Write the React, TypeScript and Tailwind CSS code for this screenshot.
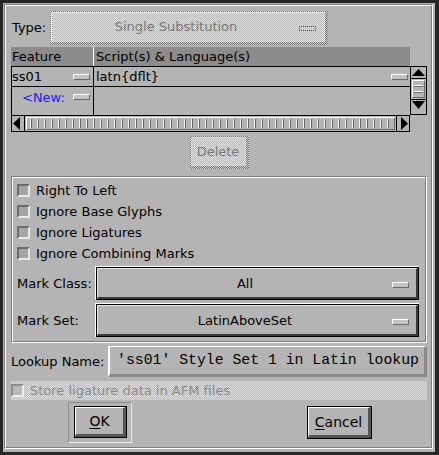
const checkerDark =
  "bg-[image:repeating-conic-gradient(#707070_0%_25%,#d4d4d4_0%_50%)] bg-[length:2px_2px]"
const checkerLight =
  "bg-[image:repeating-conic-gradient(#bdbdbd_0%_25%,#dcdcdc_0%_50%)] bg-[length:2px_2px]"

function Marker() {
  return (
    <span className="block w-[17px] h-[6px] bg-[#c4c4c4] border border-t-white border-l-white border-b-[#6a6a6a] border-r-[#6a6a6a]" />
  )
}

function Check({ disabled }: { disabled?: boolean }) {
  return (
    <span
      className={
        disabled
          ? "block w-[13px] h-[13px] border-2 border-t-[#8e8e8e] border-l-[#8e8e8e] border-b-[#eeeeee] border-r-[#eeeeee] bg-[#b8b8b8]"
          : "block w-[13px] h-[13px] border-2 border-t-[#6c6c6c] border-l-[#6c6c6c] border-b-[#e8e8e8] border-r-[#e8e8e8] bg-[#a4a4a4]"
      }
    />
  )
}

function Etched({ className, children }: { className?: string; children?: React.ReactNode }) {
  return (
    <div className={`border border-t-[#7c7c7c] border-l-[#7c7c7c] border-b-white border-r-white ${className ?? ""}`}>
      <div className="w-full h-full border border-t-white border-l-white border-b-[#7c7c7c] border-r-[#7c7c7c]">
        {children}
      </div>
    </div>
  )
}

function ListButton({ label }: { label: string }) {
  return (
    <div className="w-[324px] h-[34px] border-t border-l border-t-white border-l-white">
      <div className="h-full border border-black">
        <div className="relative h-full flex items-center justify-center pr-[24px] border-t border-l border-t-[#e6e6e6] border-l-[#e6e6e6] border-b-2 border-r-2 border-b-[#3a3a3a] border-r-[#3a3a3a]">
          {label}
          <span className="absolute right-[7px] top-[13px]">
            <Marker />
          </span>
        </div>
      </div>
    </div>
  )
}

function PushButton({ className, children }: { className?: string; children?: React.ReactNode }) {
  return (
    <div className={`border border-black ${className ?? ""}`}>
      <div className="h-full flex items-center justify-center border-t border-l border-t-white border-l-white border-b-[3px] border-r-[3px] border-b-[#555555] border-r-[#555555] text-[14px]">
        {children}
      </div>
    </div>
  )
}

export default function App() {
  return (
    <div className="w-[439px] h-[455px] bg-[#b4b4b4] border-t-[3px] border-l-[3px] border-b-[3px] border-r-[4px] border-[#262626] font-['DejaVu_Sans',sans-serif] text-[13px] leading-none text-black">
      <Etched className="mt-[1px] ml-[1px] w-[429px] h-[445px]">
        <div className="flex flex-col pl-[5px]">
          {/* Type */}
          <div className="mt-[5px] h-[33px] flex items-center">
            <span className="ml-[1px] w-[38px]">Type:</span>
            <div className={`w-[278px] h-[34px] p-[1px] pr-[3px] pb-[3px] ${checkerDark}`}>
              <div className={`relative h-full flex items-center justify-center pr-[24px] border border-dotted border-[#efefef] ${checkerLight} text-[#787878]`}>
                Single Substitution
                <span className="absolute right-[8px] top-[13px] w-[17px] h-[5px] border border-dotted border-[#555555]" />
              </div>
            </div>
          </div>

          {/* Table header */}
          <div className="mt-[3px] w-[399px] h-[19px] bg-[#8c8c8c] flex items-center">
            <div className="w-[83px] h-full border-r border-white flex items-center pl-[1px]">Feature</div>
            <div className="pl-[2px]">Script(s) &amp; Language(s)</div>
          </div>

          {/* Table body */}
          <div className="flex w-[416px] h-[49px]">
            <div className="w-[399px] h-full border-t border-l border-black flex flex-col">
              <div className="h-[20px] flex border-b border-black">
                <div className="w-[82px] border-r border-black flex items-center justify-between pr-[3px]">
                  <span>ss01</span>
                  <Marker />
                </div>
                <div className="flex-1 flex items-center justify-between pl-[2px] pr-[2px]">
                  <span>latn{"{dflt}"}</span>
                  <Marker />
                </div>
              </div>
              <div className="flex-1 flex">
                <div className="w-[82px] border-r border-black">
                  <div className="h-[20px] flex items-center justify-between pl-[10px] pr-[3px]">
                    <span className="text-[#1c1cf0]">&lt;New:</span>
                    <Marker />
                  </div>
                </div>
                <div className="flex-1" />
              </div>
            </div>
            {/* vertical scrollbar */}
            <div className="w-[17px] h-full border border-black flex flex-col">
              <div className="h-[12px] border-b border-black">
                <svg width="15" height="11" viewBox="0 0 15 11">
                  <polygon points="1,9 14,9 7.5,2" fill="#000" />
                </svg>
              </div>
              <div className="h-[21px] border-b border-black p-[1px]">
                <div className="h-full border border-t-white border-l-white border-b-[#6a6a6a] border-r-[#6a6a6a] flex flex-col justify-center gap-[4px] px-[1px]">
                  <span className="block h-[2px] border-t border-t-white border-b border-b-[#6a6a6a]" />
                  <span className="block h-[2px] border-t border-t-white border-b border-b-[#6a6a6a]" />
                </div>
              </div>
              <div className="flex-1">
                <svg width="15" height="11" viewBox="0 0 15 11">
                  <polygon points="1,1 14,1 7.5,9" fill="#000" />
                </svg>
              </div>
            </div>
          </div>

          {/* horizontal scrollbar */}
          <div className="w-[399px] h-[17px] border border-black flex">
            <div className="w-[12px] h-full flex items-center">
              <svg width="12" height="15" viewBox="0 0 12 15">
                <polygon points="8,1 8,14 1,7.5" fill="#000" />
              </svg>
            </div>
            <div className="flex-1 h-full border-x border-black p-[1px]">
              <div className="h-full border border-t-white border-l-white border-b-[#6a6a6a] border-r-[#6a6a6a] py-[1px]">
                <div className="h-full bg-[image:repeating-linear-gradient(90deg,transparent_0_3px,#f2f2f2_3px_4px,#666666_4px_5px,transparent_5px_7px)]" />
              </div>
            </div>
            <div className="w-[12px] h-full flex items-center">
              <svg width="12" height="15" viewBox="0 0 12 15">
                <polygon points="4,1 4,14 11,7.5" fill="#000" />
              </svg>
            </div>
          </div>

          {/* Delete */}
          <div className="mt-[4px] w-[416px] flex justify-center">
            <div className={`w-[59px] h-[33px] p-[1px] pr-[3px] pb-[3px] ${checkerDark}`}>
              <div className={`h-full flex items-center justify-center border border-dotted border-[#efefef] ${checkerLight} text-[#787878]`}>
                Delete
              </div>
            </div>
          </div>

          {/* Flags group */}
          <Etched className="mt-[7px] w-[416px] h-[167px]">
            <div className="flex flex-col pl-[4px] pt-[2px]">
              {["Right To Left", "Ignore Base Glyphs", "Ignore Ligatures", "Ignore Combining Marks"].map((t) => (
                <div key={t} className="h-[21px] flex items-center gap-[6px]">
                  <Check />
                  <span>{t}</span>
                </div>
              ))}
              <div className="mt-[2px] flex items-center">
                <span className="w-[78px]">Mark Class:</span>
                <ListButton label="All" />
              </div>
              <div className="mt-[3px] flex items-center">
                <span className="w-[78px]">Mark Set:</span>
                <ListButton label="LatinAboveSet" />
              </div>
            </div>
          </Etched>

          {/* Lookup name */}
          <div className="mt-[3px] w-[416px] h-[31px] flex items-center">
            <span className="w-[97px]">Lookup Name:</span>
            <div className="w-[319px] h-full border-t border-l-2 border-t-white border-l-white border-b-[3px] border-r-[3px] border-b-[#8a8a8a] border-r-[#8a8a8a] flex items-center pl-[7px] font-['Liberation_Mono',monospace] text-[14.8px] whitespace-nowrap">
              'ss01' Style Set 1 in Latin lookup
            </div>
          </div>

          {/* Store ligature */}
          <div className={`mt-[4px] w-[416px] h-[19px] flex items-center gap-[6px] ${checkerLight}`}>
            <Check disabled />
            <span className="text-[#8a8a8a]">Store ligature data in AFM files</span>
          </div>

          {/* Buttons */}
          <div className="mt-[2px] h-[41px] flex items-start">
            <div className="ml-[57px] w-[64px] h-[41px] border border-t-[#8c8c8c] border-l-[#8c8c8c] border-b-[#ececec] border-r-[#ececec] pl-[5px] pt-[3px]">
              <PushButton className="w-[53px] h-[32px]">
                <span>
                  <u className="underline-offset-2">O</u>K
                </span>
              </PushButton>
            </div>
            <PushButton className="ml-[175px] mt-[4px] w-[65px] h-[33px]">
              <span>
                <u className="underline-offset-2">C</u>ancel
              </span>
            </PushButton>
          </div>
        </div>
      </Etched>
    </div>
  )
}
